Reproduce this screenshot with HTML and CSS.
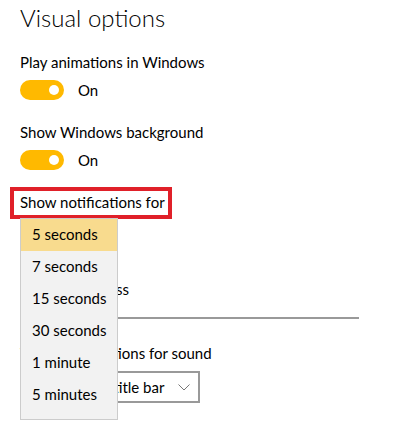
FILE: index.html
```html
<!DOCTYPE html>
<html lang="en">
  <head>
    <meta charset="UTF-8" />
    <title>Visual options</title>
    <link rel="stylesheet" href="styles.css">
  </head>
  <body>
    <div class="settings-page">
      <h1 class="page-title">Visual options</h1>

      <div class="setting">
        <div class="setting-label">Play animations in Windows</div>
        <div class="toggle-row">
          <span class="toggle"><span class="toggle-knob"></span></span>
          <span class="toggle-state">On</span>
        </div>
      </div>

      <div class="setting">
        <div class="setting-label">Show Windows background</div>
        <div class="toggle-row">
          <span class="toggle"><span class="toggle-knob"></span></span>
          <span class="toggle-state">On</span>
        </div>
      </div>

      <div class="setting setting-combo">
        <div class="setting-label"><span class="highlight">Show notifications for</span></div>
        <div class="combo combo-hidden">5 seconds</div>

        <!-- open dropdown list -->
        <ul class="combo-menu">
          <li class="combo-item selected">5 seconds</li>
          <li class="combo-item">7 seconds</li>
          <li class="combo-item">15 seconds</li>
          <li class="combo-item">30 seconds</li>
          <li class="combo-item">1 minute</li>
          <li class="combo-item">5 minutes</li>
        </ul>
      </div>

      <div class="setting setting-slider">
        <div class="setting-label">Cursor thickness</div>
        <div class="slider">
          <span class="slider-fill"></span>
          <span class="slider-thumb"></span>
          <span class="slider-rest"></span>
        </div>
      </div>

      <div class="setting">
        <div class="setting-label">Visual notifications for sound</div>
        <div class="combo">
          <span class="combo-text">Flash active title bar</span>
          <svg class="combo-chevron" width="12" height="7" viewBox="0 0 12 7">
            <path d="M0.5 0.5 L6 6 L11.5 0.5" fill="none" stroke="#777" stroke-width="1" />
          </svg>
        </div>
      </div>
    </div>
  </body>
</html>
```

FILE: styles.css
```css
* {
  box-sizing: border-box;
  margin: 0;
  padding: 0;
}

body {
  font-family: Lato, "Noto Sans", sans-serif;
  background-color: #ffffff;
  color: #000000;
  font-size: 15px;
}

.settings-page {
  padding: 0 20px;
  position: relative;
}

.page-title {
  font-size: 24px;
  font-weight: 300;
  line-height: 36px;
  margin-bottom: 16px;
}

.setting {
  margin-bottom: 22px;
}

.setting-label {
  line-height: 20px;
  height: 20px;
}

.toggle-row {
  display: flex;
  align-items: center;
  margin-top: 8px;
  height: 20px;
}

.toggle {
  width: 44px;
  height: 20px;
  border-radius: 10px;
  background-color: #ffb900;
  display: flex;
  align-items: center;
  justify-content: flex-end;
  padding-right: 5px;
}

.toggle-knob {
  width: 10px;
  height: 10px;
  border-radius: 50%;
  background-color: #ffffff;
}

.toggle-state {
  margin-left: 14px;
}

.highlight {
  display: inline-block;
  outline: 4px solid #e02029;
  padding: 1px 3px 3px 6px;
  margin-left: -6px;
  margin-top: -1px;
  line-height: 20px;
}

/* combo box + open list */
.setting-combo {
  position: relative;
  margin-bottom: 27px;
}

.combo {
  width: 180px;
  height: 32px;
  border: 2px solid #999999;
  margin-top: 8px;
  display: flex;
  align-items: center;
  justify-content: space-between;
  padding: 0 8px 0 10px;
}

.combo-hidden {
  visibility: hidden;
}

.combo-menu {
  list-style: none;
  position: absolute;
  left: 0;
  top: 26px;
  width: 98px;
  background-color: #f2f2f2;
  border: 1px solid #cccccc;
  padding-bottom: 8px;
  z-index: 2;
}

.combo-item {
  height: 32px;
  line-height: 31px;
  padding-left: 11px;
  white-space: nowrap;
}

.combo-item.selected {
  background-color: #f8db8e;
}

/* slider */
.setting-slider {
  margin-bottom: 13px;
}

.slider {
  display: flex;
  align-items: center;
  width: 339px;
  height: 24px;
  margin-top: 7px;
}

.slider-fill {
  width: 10px;
  height: 2px;
  background-color: #ffb900;
}

.slider-thumb {
  width: 8px;
  height: 24px;
  border-radius: 4px;
  background-color: #ffb900;
}

.slider-rest {
  flex-grow: 1;
  height: 2px;
  background-color: #999999;
}

.combo-chevron {
  flex-shrink: 0;
}
```
